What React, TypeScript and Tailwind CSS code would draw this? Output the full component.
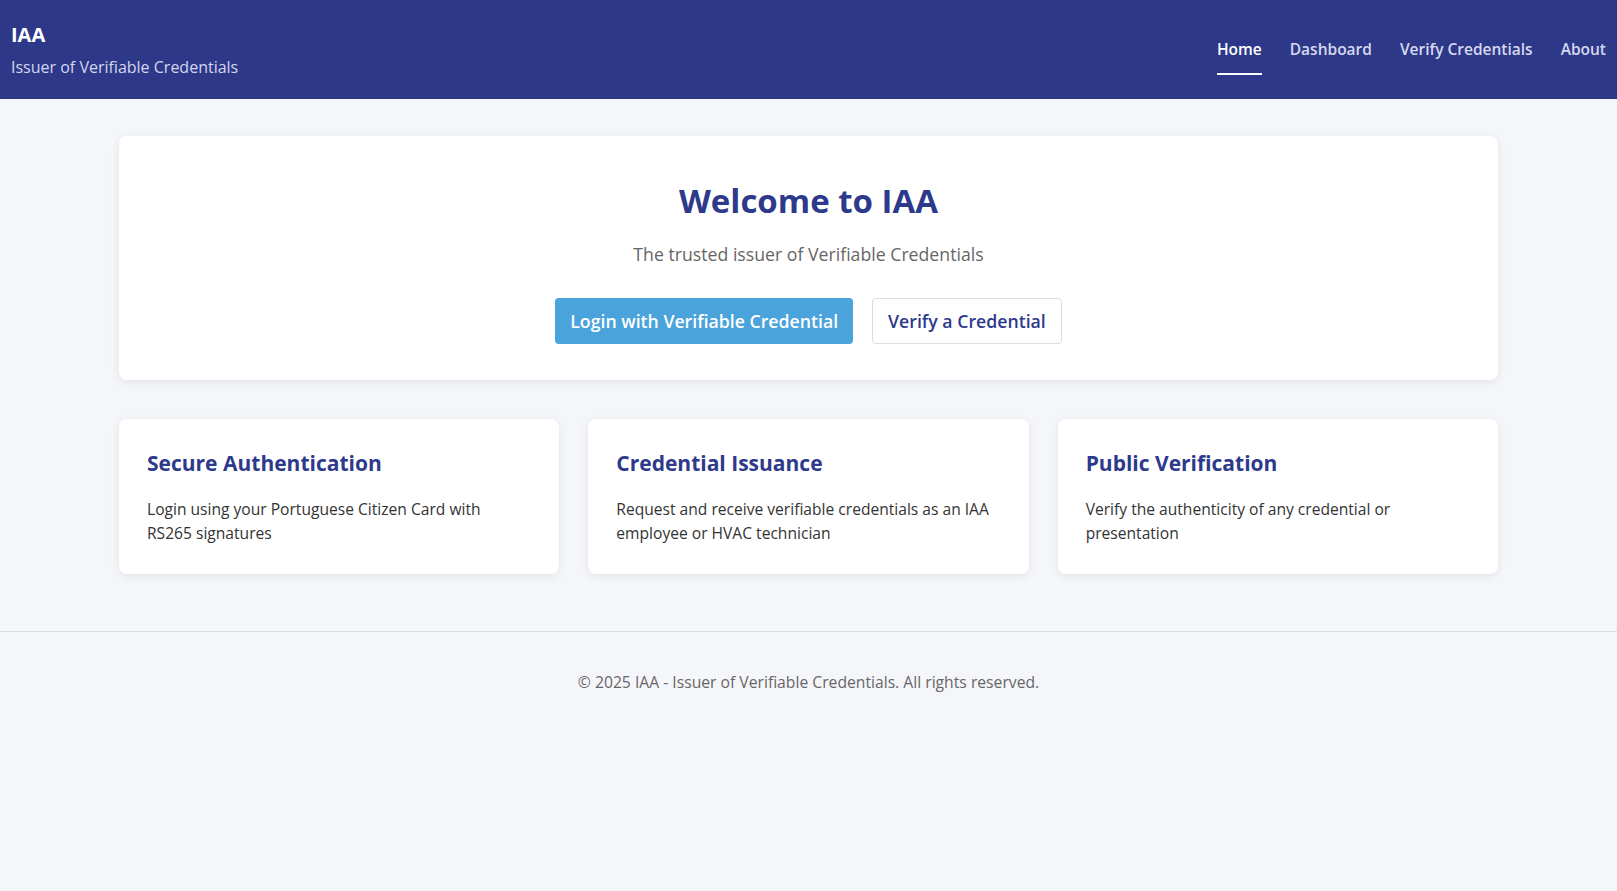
import React from 'react';

const navLinks = [
  { label: 'Home', active: true },
  { label: 'Dashboard', active: false },
  { label: 'Verify Credentials', active: false },
  { label: 'About', active: false },
];

const features = [
  {
    title: 'Secure Authentication',
    text: 'Login using your Portuguese Citizen Card with RS265 signatures',
  },
  {
    title: 'Credential Issuance',
    text: 'Request and receive verifiable credentials as an IAA employee or HVAC technician',
  },
  {
    title: 'Public Verification',
    text: 'Verify the authenticity of any credential or presentation',
  },
];

export default function App() {
  return (
    <div className="min-h-screen bg-[#f5f6fa] font-['Open_Sans',sans-serif] text-[#333]">
      {/* Header */}
      <header className="h-[99px] bg-[#2e3889] px-[11px] flex items-center justify-between">
        <div className="flex flex-col">
          <h1 className="text-[20px] leading-[26px] font-bold text-white">IAA</h1>
          <p className="text-[16px] leading-[22px] mt-[8px] text-[#d3d6ee]">Issuer of Verifiable Credentials</p>
        </div>
        <nav className="flex items-center gap-[28px] -mt-[2px]">
          {navLinks.map((link) => (
            <a
              key={link.label}
              href="#"
              className={`relative text-[15.5px] leading-[22px] font-semibold ${link.active ? 'text-white' : 'text-[#d6d9ee]'}`}
            >
              {link.label}
              {link.active && <span className="absolute left-0 right-0 top-[35px] h-[2px] bg-white" />}
            </a>
          ))}
        </nav>
      </header>

      <main className="max-w-[1379px] mx-auto pt-[37px]">
        {/* Hero */}
        <section className="bg-white rounded-[8px] shadow-[0_2px_10px_rgba(0,0,0,0.08)] pt-[43px] pb-[36px] flex flex-col items-center">
          <h2 className="text-[33px] leading-[44px] font-bold text-[#2d3a8c]">Welcome to IAA</h2>
          <p className="mt-[18px] text-[17.7px] leading-[26px] text-[#666]">The trusted issuer of Verifiable Credentials</p>
          <div className="mt-[31px] flex gap-[19px]">
            <button className="h-[46px] px-[15px] rounded-[4px] bg-[#4aa3db] text-white text-[17.7px] font-semibold">
              Login with Verifiable Credential
            </button>
            <button className="h-[46px] px-[15px] rounded-[4px] bg-white border border-[#dcdde3] text-[#2d3a8c] text-[17.7px] font-semibold">
              Verify a Credential
            </button>
          </div>
        </section>

        {/* Features */}
        <section className="mt-[39px] grid grid-cols-3 gap-[29px]">
          {features.map((f) => (
            <div
              key={f.title}
              className="bg-white rounded-[8px] shadow-[0_2px_10px_rgba(0,0,0,0.08)] px-[28px] pt-[30px] h-[155px]"
            >
              <h3 className="text-[21px] leading-[28px] font-bold text-[#2d3a8c]">{f.title}</h3>
              <p className="mt-[20px] max-w-[378px] text-[15.6px] leading-[24px] text-[#333]">{f.text}</p>
            </div>
          ))}
        </section>
      </main>

      {/* Footer */}
      <footer className="mt-[57px] border-t border-[#dcdde2] pt-[38px] text-center">
        <p className="text-[15.7px] leading-[24px] text-[#666]">
          © 2025 IAA - Issuer of Verifiable Credentials. All rights reserved.
        </p>
      </footer>
    </div>
  );
}
